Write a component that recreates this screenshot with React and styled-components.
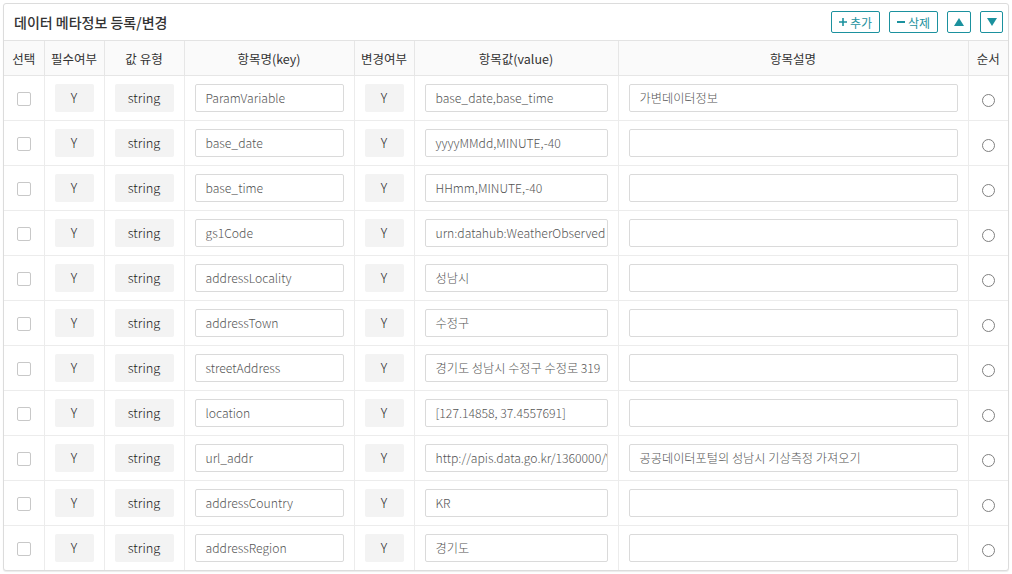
import React from 'react';
import styled, { createGlobalStyle } from 'styled-components';

const GlobalStyle = createGlobalStyle`
	body {
		margin: 0;
		background: #ffffff;
		font-family: "Noto Sans CJK KR", "Noto Sans", sans-serif;
		color: #333;
	}
`;

const teal = '#1b919e';

const Panel = styled.div`
	margin: 3px;
	width: 1006px;
	box-sizing: border-box;
	border: 1px solid #dcdcdc;
	border-radius: 3px;
	background: #fff;
	box-shadow: 0 1px 1px rgba(0, 0, 0, 0.08);
	overflow: hidden;
`;

const TitleBar = styled.div`
	height: 36px;
	display: flex;
	align-items: center;
	justify-content: space-between;
	padding: 0 5px 0 10px;
	border-bottom: 1px solid #e3e3e3;
`;

const Title = styled.h2`
	margin: 0;
	font-size: 14px;
	font-weight: 500;
	color: #333;
`;

const Tools = styled.div`
	display: flex;
	gap: 9px;
`;

const ToolButton = styled.button`
	height: 22px;
	width: ${p => p.$w}px;
	box-sizing: border-box;
	border: 1px solid ${teal};
	border-radius: 2px;
	background: #fff;
	color: ${teal};
	font-family: "Noto Sans CJK KR", sans-serif;
	font-size: 12px;
	padding: 0;
	display: flex;
	align-items: center;
	justify-content: center;
	gap: 3px;
	cursor: pointer;
`;

const Table = styled.table`
	width: 100%;
	border-collapse: collapse;
	table-layout: fixed;
	font-size: 13px;
`;

const Th = styled.th`
	height: 34px;
	background: #fafafa;
	font-weight: 400;
	color: #333;
	font-size: 12.5px;
	border-right: 1px solid #e6e6e6;
	border-bottom: 1px solid #e6e6e6;
	padding: 0;
	&:last-child { border-right: none; }
`;

const Td = styled.td`
	height: 44px;
	padding: 0 10px;
	text-align: center;
	border-right: 1px solid #ececec;
	border-bottom: 1px solid #ececec;
	&:first-child { padding: 0 9px; }
	&:last-child { border-right: none; }
	tr:last-child & { border-bottom: none; }
`;

const Check = styled.span`
	display: inline-block;
	width: 12px;
	height: 12px;
	border: 1px solid #c8c8c8;
	border-radius: 2px;
	background: #fff;
	vertical-align: middle;
	margin-bottom: 2px;
`;

const Radio = styled.span`
	display: inline-block;
	width: 11px;
	height: 11px;
	border: 1px solid #808080;
	border-radius: 50%;
	vertical-align: middle;
	margin-top: 1px;
`;

const Badge = styled.div`
	height: 28px;
	display: flex;
	align-items: center;
	justify-content: center;
	background: #f3f3f3;
	border-radius: 2px;
	color: #222;
	font-size: 12.8px;
	font-weight: 300;
	padding-bottom: 1px;
	box-sizing: border-box;
`;

const Field = styled.div`
	height: 28px;
	box-sizing: border-box;
	border: 1px solid #dadada;
	border-radius: 2px;
	background: #fff;
	display: flex;
	align-items: center;
	padding: 0 0 1px 10px;
	color: #555;
	font-size: 12.2px;
	font-weight: 300;
	white-space: nowrap;
	overflow: hidden;
	text-align: left;
`;

const columns = [
	['선택', 40], ['필수여부', 60], ['값 유형', 80], ['항목명(key)', 170],
	['변경여부', 60], ['항목값(value)', 204], ['항목설명', 350], ['순서', 40],
];

const rows = [
	['ParamVariable', 'base_date,base_time', '가변데이터정보'],
	['base_date', 'yyyyMMdd,MINUTE,-40', ''],
	['base_time', 'HHmm,MINUTE,-40', ''],
	['gs1Code', 'urn:datahub:WeatherObserved', ''],
	['addressLocality', '성남시', ''],
	['addressTown', '수정구', ''],
	['streetAddress', '경기도 성남시 수정구 수정로 319', ''],
	['location', '[127.14858, 37.4557691]', ''],
	['url_addr', 'http://apis.data.go.kr/1360000/VilageFcstInfoService', '공공데이터포털의 성남시 기상측정 가져오기'],
	['addressCountry', 'KR', ''],
	['addressRegion', '경기도', ''],
];

export default function App() {
	return (
		<>
			<GlobalStyle />
			<Panel>
				<TitleBar>
					<Title>데이터 메타정보 등록/변경</Title>
					<Tools>
						<ToolButton $w={49}>
							<svg width="8" height="8" viewBox="0 0 8 8"><path d="M4 0v8M0 4h8" stroke={teal} strokeWidth="1.6" /></svg>
							추가
						</ToolButton>
						<ToolButton $w={49}>
							<svg width="8" height="8" viewBox="0 0 8 8"><path d="M0 4h8" stroke={teal} strokeWidth="1.8" /></svg>
							삭제
						</ToolButton>
						<ToolButton $w={24}>
							<svg width="10" height="8" viewBox="0 0 10 8"><path d="M5 0L10 8H0z" fill={teal} /></svg>
						</ToolButton>
						<ToolButton $w={23}>
							<svg width="10" height="8" viewBox="0 0 10 8"><path d="M0 0H10L5 8z" fill={teal} /></svg>
						</ToolButton>
					</Tools>
				</TitleBar>
				<Table>
					<colgroup>
						{columns.map(([name, w]) => <col key={name} style={{ width: w }} />)}
					</colgroup>
					<thead>
						<tr>{columns.map(([name]) => <Th key={name}>{name}</Th>)}</tr>
					</thead>
					<tbody>
						{rows.map(([key, value, desc]) => (
							<tr key={key}>
								<Td><Check /></Td>
								<Td><Badge>Y</Badge></Td>
								<Td><Badge>string</Badge></Td>
								<Td><Field>{key}</Field></Td>
								<Td><Badge>Y</Badge></Td>
								<Td><Field>{value}</Field></Td>
								<Td><Field>{desc}</Field></Td>
								<Td><Radio /></Td>
							</tr>
						))}
					</tbody>
				</Table>
			</Panel>
		</>
	);
}
